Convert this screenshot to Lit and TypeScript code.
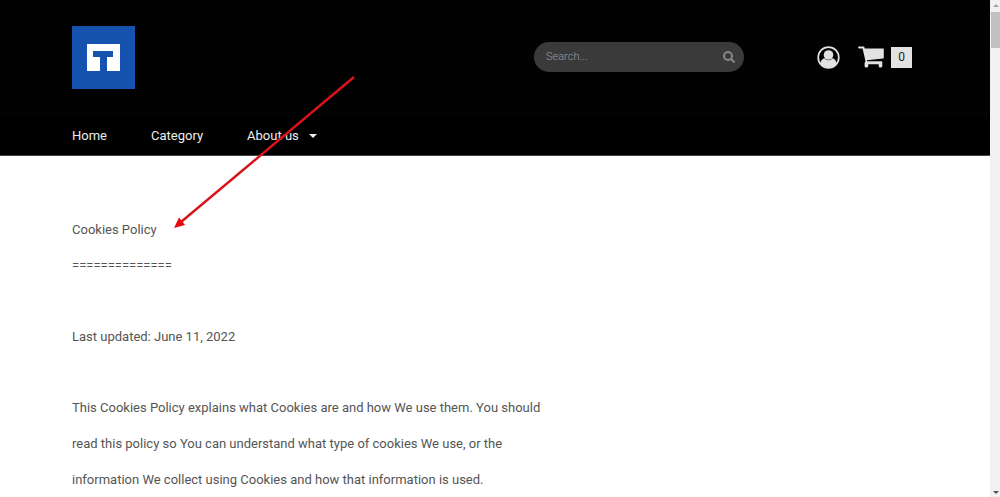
import { LitElement, html, css } from "lit";
import { customElement, property, state } from "lit/decorators.js";

@customElement("site-header")
class SiteHeader extends LitElement {
  @property({ type: Number }) count = 0;

  static styles = css`
    :host { display: block; background: #020202; color: #eee; }
    .top { display: flex; align-items: flex-start; padding: 26px 78px 28px 72px; }
    .logo { display: block; width: 63px; height: 63px; }
    .logo svg, .icon svg { display: block; }
    .tools { display: flex; align-items: center; margin-left: auto; padding-top: 16px; }
    .search { display: flex; align-items: center; box-sizing: border-box; width: 210px; height: 30px; padding: 0 8px 0 12px; border-radius: 15px; background: #3a3a3a; }
    .search input { flex: 1; min-width: 0; padding: 0; border: 0; outline: 0; background: none; color: #ddd; font: 300 11px/16px Roboto, sans-serif; }
    .search input::placeholder { color: #9a9a9a; opacity: 1; }
    button { display: block; padding: 0; border: 0; background: none; color: inherit; cursor: pointer; }
    .search button { color: #888; }
    .icon { display: block; color: #e2e2e2; }
    .account { margin-left: 73px; }
    .cart { display: flex; align-items: center; gap: 7px; margin-left: 18px; text-decoration: none; color: #e2e2e2; }
    .count { display: block; width: 21px; background: #e2e2e2; color: #222; text-align: center; font: 12px/21px Roboto, sans-serif; }
    nav { display: flex; gap: 44px; padding: 0 72px; background: #000; border-bottom: 1px solid #444; }
    nav a, nav button { color: #eee; text-decoration: none; font: 13px/38px Roboto, sans-serif; }
    nav button { display: flex; align-items: center; gap: 10px; }
  `;

  render() {
    return html`
      <div class="top">
        <a class="logo" href="#" aria-label="Home page">
          <svg width="63" height="63" viewBox="0 0 63 63">
            <path fill="#1553ae" d="M0 0h63v63H0z" />
            <path fill="#fff" d="M15 18h33v27H35V31h6v-6H21v6h7v14H15z" />
          </svg>
        </a>
        <div class="tools">
          <form class="search" role="search" @submit=${(e: Event) => e.preventDefault()}>
            <input type="search" aria-label="Search" placeholder="Search..." />
            <button aria-label="Submit search">
              <svg width="14" height="14" viewBox="0 0 14 14" fill="none" stroke="currentColor" stroke-width="2">
                <circle cx="6" cy="7" r="4" /><path d="M9 10l3.500 3.500" />
              </svg>
            </button>
          </form>
          <a class="icon account" href="#" aria-label="Account">
            <svg width="23" height="23" viewBox="0 0 23 23">
              <circle cx="11.5" cy="11.5" r="10.3" fill="none" stroke="currentColor" stroke-width="1.7" />
              <circle cx="11.5" cy="9" r="4.8" fill="currentColor" />
              <path fill="currentColor" d="M3.6 17.5c.3-2.7 1.5-4.6 3.6-5.2 2.4 2.6 6.2 2.6 8.6 0 2.1.6 3.3 2.5 3.6 5.2A10 10 0 0 1 3.6 17.5z" />
            </svg>
          </a>
          <a class="cart" href="#" aria-label="Cart">
            <svg width="26" height="22" viewBox="0 0 26 22" fill="currentColor">
              <path d="M1 .5h4.500c.6 0 .9.3 1 .9l.2 1.100H25c.5 0 .8.4.8.9v8.300c0 .5-.3.8-.8.9L8.900 14.200l.3 1H23.500c.5 0 .8.300.8.800V20c0 2-3.600 2-3.600 0v-1.800H10.200V20c0 2-3.600 2-3.600 0v-3l.9-1.800L4.600 2.400H1C-.2 2.400-.2.5 1 .5z" />
            </svg>
            <span class="count">${this.count}</span>
          </a>
        </div>
      </div>
      <nav aria-label="Main">
        <a href="#">Home</a>
        <a href="#">Category</a>
        <button aria-haspopup="true">
          About us
          <svg width="8" height="4" viewBox="0 0 8 4" fill="currentColor"><path d="M0 0h8L4 4z" /></svg>
        </button>
      </nav>
    `;
  }
}

@customElement("scroll-strip")
class ScrollStrip extends LitElement {
  static styles = css`
    :host { display: flex; flex-direction: column; align-items: center; background: #f1f1f1; }
    svg { display: block; flex: none; fill: #505050; }
    .up { fill: #a3a3a3; }
    .track { flex: 1; align-self: stretch; padding-left: 1px; }
    .thumb { height: 36px; background: #c1c1c1; }
  `;
  render() {
    return html`
      <svg class="up" width="10" height="12" viewBox="0 0 10 12"><path d="M3 7h6L6 4z" /></svg>
      <div class="track"><div class="thumb"></div></div>
      <svg width="10" height="9" viewBox="0 0 10 9"><path d="M3 3h6L6 6z" /></svg>
    `;
  }
}

@customElement("app-root")
class AppRoot extends LitElement {
  @state() private cartCount = 0;

  static styles = css`
    :host { display: grid; grid-template-columns: minmax(0, 1fr) 10px; position: relative; height: 100vh; overflow: hidden; background: #fff; font-family: Roboto, sans-serif; }
    .page { min-width: 0; overflow: hidden; }
    article { display: flex; flex-direction: column; gap: 35px; max-width: 480px; padding: 56px 72px 0; color: #555; font-size: 13px; line-height: 36px; }
    h1, p { margin: 0; font: inherit; }
    .arrow { position: absolute; left: 174px; top: 76px; pointer-events: none; }
  `;

  render() {
    return html`
      <div class="page">
        <site-header .count=${this.cartCount}></site-header>
        <article>
          <header><h1>Cookies Policy</h1><p>==============</p></header>
          <p>Last updated: June 11, 2022</p>
          <p>This Cookies Policy explains what Cookies are and how We use them. You should read this policy so You can understand what type of cookies We use, or the information We collect using Cookies and how that information is used.</p>
        </article>
      </div>
      <scroll-strip aria-hidden="true"></scroll-strip>
      <svg class="arrow" width="182" height="154" viewBox="0 0 182 154" aria-hidden="true">
        <path d="M180 1L7 146" stroke="#d9141a" stroke-width="2.4" />
        <path d="M0 152l5-10.500 2.500 3 3.500 4.500z" fill="#e80a10" />
      </svg>
    `;
  }
}
